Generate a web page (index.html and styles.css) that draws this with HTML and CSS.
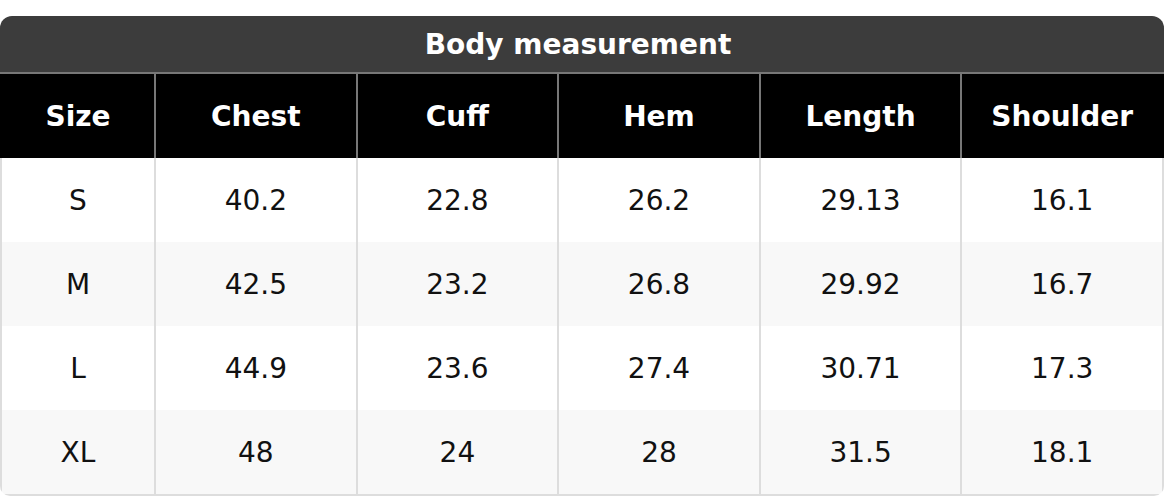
FILE: index.html
```html
<!DOCTYPE html>
<html>
<head>
<meta charset="utf-8">
<link rel="stylesheet" href="styles.css">
</head>
<body>
<div class="card">
  <div class="title">Body measurement</div>
  <div class="grid">
    <div class="cell head">Size</div>
    <div class="cell head">Chest</div>
    <div class="cell head">Cuff</div>
    <div class="cell head">Hem</div>
    <div class="cell head">Length</div>
    <div class="cell head">Shoulder</div>

    <div class="cell">S</div>
    <div class="cell">40.2</div>
    <div class="cell">22.8</div>
    <div class="cell">26.2</div>
    <div class="cell">29.13</div>
    <div class="cell">16.1</div>

    <div class="cell alt">M</div>
    <div class="cell alt">42.5</div>
    <div class="cell alt">23.2</div>
    <div class="cell alt">26.8</div>
    <div class="cell alt">29.92</div>
    <div class="cell alt">16.7</div>

    <div class="cell">L</div>
    <div class="cell">44.9</div>
    <div class="cell">23.6</div>
    <div class="cell">27.4</div>
    <div class="cell">30.71</div>
    <div class="cell">17.3</div>

    <div class="cell alt">XL</div>
    <div class="cell alt">48</div>
    <div class="cell alt">24</div>
    <div class="cell alt">28</div>
    <div class="cell alt">31.5</div>
    <div class="cell alt">18.1</div>
  </div>
</div>
</body>
</html>
```
FILE: styles.css
```css
html, body {
  margin: 0;
  padding: 0;
  background: #ffffff;
}
body {
  padding-top: 16px;
  font-family: "DejaVu Sans", sans-serif;
}
.card {
  width: 1164px;
  border-radius: 12px 12px 10px 10px;
  overflow: hidden;
  background: #ffffff;
}
.title {
  height: 56px;
  padding-right: 8px;
  background: #3c3c3c;
  color: #ffffff;
  font-weight: bold;
  font-size: 28px;
  display: flex;
  align-items: center;
  justify-content: center;
  border-bottom: 2px solid #777777;
}
.grid {
  display: grid;
  grid-template-columns: 154px repeat(4, 201.6px) 1fr;
  border-bottom: 2px solid #dddddd;
}
.cell {
  height: 84px;
  display: flex;
  align-items: center;
  justify-content: center;
  font-size: 28px;
  color: #111111;
  border-left: 2px solid #dddddd;
  background: #ffffff;
}
.cell:nth-child(6n) {
  border-right: 2px solid #dddddd;
}
.cell.alt {
  background: #f8f8f8;
}
.cell.head {
  background: #000000;
  color: #ffffff;
  font-weight: bold;
  border-left-color: #777777;
}
.cell.head:first-child {
  border-left-color: #000000;
}
.cell.head:nth-child(6n) {
  border-right-color: #000000;
}
```
